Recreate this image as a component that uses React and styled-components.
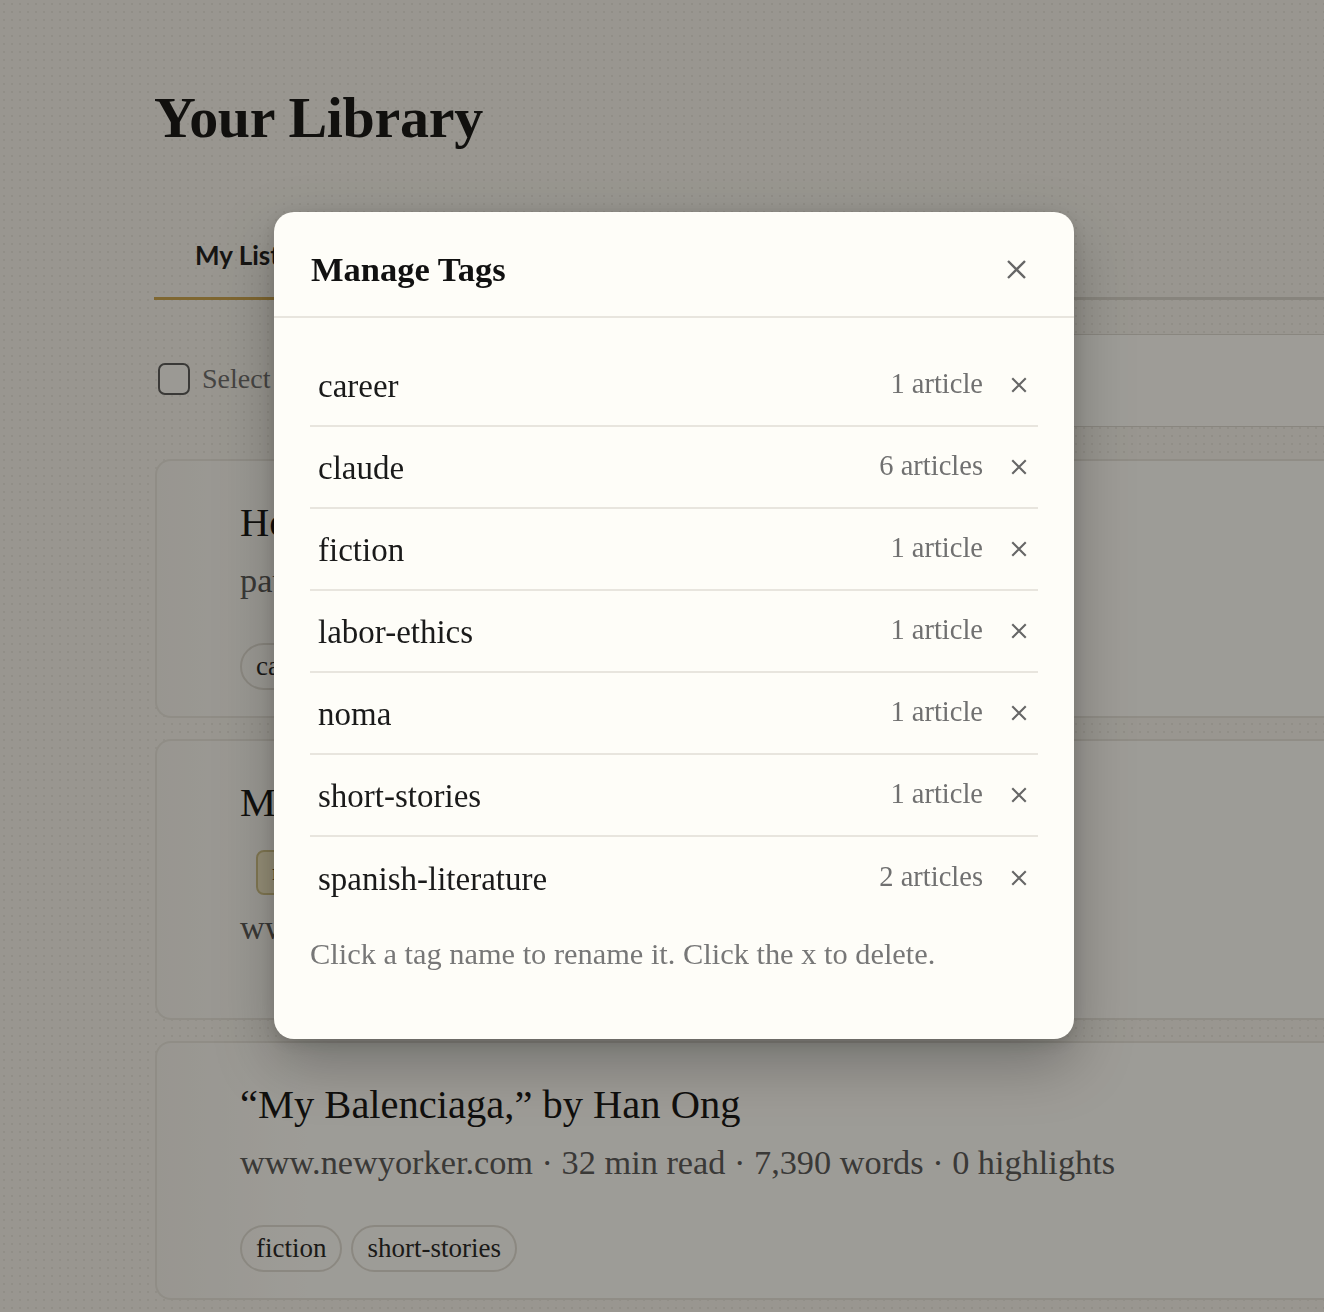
import React from "react";
import styled, { createGlobalStyle } from "styled-components";

const GlobalStyle = createGlobalStyle`
  html, body { margin: 0; padding: 0; }
  body {
    overflow: hidden;
    background-color: #f3f1ea;
    background-image: radial-gradient(rgba(120, 110, 90, 0.10) 1px, transparent 1.4px);
    background-size: 8px 8px;
    font-family: "Liberation Serif", "Times New Roman", serif;
    color: #111;
  }
`;

const Page = styled.main`
  width: 1260px;
  padding: 80px 0 40px 154px;
  box-sizing: content-box;
`;

const PageTitle = styled.h1`
  margin: 0;
  font-family: "Liberation Serif", serif;
  font-weight: 700;
  font-size: 58px;
  line-height: 76px;
  letter-spacing: -0.3px;
  color: #111;
`;

const Tabs = styled.nav`
  display: flex;
  margin-top: 56px;
  border-bottom: 3px solid #d6d3ca;
`;

const Tab = styled.div`
  padding: 0 40px 0 41px;
  height: 85px;
  display: flex;
  align-items: center;
  font-family: "Lato", "Noto Sans", sans-serif;
  font-weight: 700;
  font-size: 26px;
  color: ${(p) => (p.$active ? "#1a1a1a" : "#666")};
  border-bottom: 3px solid ${(p) => (p.$active ? "#c9a24c" : "transparent")};
  margin-bottom: -3px;
`;

const Toolbar = styled.div`
  display: flex;
  align-items: center;
  gap: 24px;
  margin-top: 34px;
  height: 93px;
`;

const SelectAll = styled.label`
  display: flex;
  align-items: center;
  gap: 12px;
  padding-left: 4px;
  margin-top: -3px;
  font-size: 28px;
  color: #6a6a6a;
  white-space: nowrap;
`;

const Checkbox = styled.span`
  width: 28px;
  height: 28px;
  border: 2px solid #555;
  border-radius: 7px;
  background: #f7f6f1;
`;

const Search = styled.div`
  flex: 1;
  align-self: stretch;
  margin-left: 300px;
  background: #fcfbf6;
  border-top: 1px solid #d9d6ce;
  border-bottom: 1px solid #d9d6ce;
  border-left: 1px solid #d9d6ce;
  border-radius: 10px 0 0 10px;
`;

const CardList = styled.div`
  display: flex;
  flex-direction: column;
  gap: 21px;
  margin-top: 32px;
`;

const Card = styled.article`
  margin-left: 1px;
  background: linear-gradient(90deg, #f2f0ea 0%, #fbfaf5 12%, #fbfaf5 100%);
  border: 2px solid #e4e1d9;
  border-right: none;
  border-radius: 16px 0 0 16px;
  padding: 36px 40px ${(p) => p.$bottom || 26}px 83px;
`;

const StackCard = styled(Card)`
  display: flex;
  flex-direction: column;
`;

const CardTitle = styled.h2`
  margin: 0;
  font-weight: 400;
  font-size: 40.5px;
  line-height: 52px;
  color: #111;
  white-space: nowrap;
`;

const Meta = styled.div`
  margin-top: ${(p) => p.$top || 10}px;
  font-size: 34.3px;
  line-height: 42px;
  color: #555;
  white-space: nowrap;
`;

const Badge = styled.span`
  display: inline-flex;
  align-items: center;
  align-self: flex-start;
  margin: 21px 0 0 16px;
  height: 41px;
  padding: 0 14px;
  border: 2px solid #cdbf85;
  background: #efe6c2;
  border-radius: 8px;
  font-size: 24px;
  color: #4a4020;
`;

const TagRow = styled.div`
  display: flex;
  gap: 9px;
  margin-top: 42px;
`;

const Pill = styled.span`
  display: inline-flex;
  align-items: center;
  height: 43px;
  padding: 0 14px;
  border: 2px solid #dcd9d0;
  border-radius: 24px;
  font-size: 27px;
  color: #222;
`;

const Overlay = styled.div`
  position: fixed;
  inset: 0;
  background: rgba(18, 16, 10, 0.4);
  display: flex;
  justify-content: center;
  align-items: flex-start;
  padding: 212px 0 0 24px;
`;

const Modal = styled.div`
  width: 800px;
  height: 827px;
  box-sizing: border-box;
  background: #fefdf8;
  border-radius: 20px;
  box-shadow: 0 24px 60px rgba(0, 0, 0, 0.28), 0 4px 14px rgba(0, 0, 0, 0.12);
  display: flex;
  flex-direction: column;
`;

const ModalHeader = styled.header`
  display: flex;
  align-items: center;
  justify-content: space-between;
  height: 106px;
  padding: 11px 40px 0 37px;
  box-sizing: border-box;
  border-bottom: 2px solid #e8e5de;
`;

const ModalTitle = styled.h3`
  margin: 0;
  font-weight: 700;
  font-size: 34.5px;
  color: #111;
`;

const IconButton = styled.button`
  display: flex;
  align-items: center;
  justify-content: center;
  width: ${(p) => p.$size + 12}px;
  height: ${(p) => p.$size + 12}px;
  padding: 0;
  border: none;
  background: transparent;
  color: #666;
`;

const ModalBody = styled.div`
  padding: 27px 36px 0 36px;
`;

const TagList = styled.ul`
  list-style: none;
  margin: 0;
  padding: 0;
`;

const TagItem = styled.li`
  display: flex;
  align-items: center;
  height: 82px;
  box-sizing: border-box;
  padding: 0 4px 0 8px;
  border-bottom: 2px solid #e8e5de;
  &:last-child { border-bottom: none; }
`;

const TagName = styled.span`
  flex: 1;
  font-size: 33px;
  color: #1a1a1a;
  padding-top: 2px;
`;

const Count = styled.span`
  font-size: 28.5px;
  color: #707070;
  margin-right: 21px;
  padding-bottom: 2px;
`;

const Hint = styled.p`
  margin: 18px 0 0 0;
  font-size: 30.4px;
  color: #777;
`;

const XIcon = ({ size, weight = 2.6 }) => (
  <svg width={size} height={size} viewBox="0 0 24 24" fill="none" stroke="currentColor" strokeWidth={weight} strokeLinecap="square">
    <path d="M4 4 L20 20 M20 4 L4 20" />
  </svg>
);

const tags = [
  ["career", "1 article"],
  ["claude", "6 articles"],
  ["fiction", "1 article"],
  ["labor-ethics", "1 article"],
  ["noma", "1 article"],
  ["short-stories", "1 article"],
  ["spanish-literature", "2 articles"],
];

export default function App() {
  return (
    <>
      <GlobalStyle />
      <Page>
        <PageTitle>Your Library</PageTitle>
        <Tabs>
          <Tab $active>My List</Tab>
          <Tab>Archive</Tab>
          <Tab>Highlights</Tab>
        </Tabs>
        <Toolbar>
          <SelectAll>
            <Checkbox />
            Select all
          </SelectAll>
          <Search />
        </Toolbar>
        <CardList>
          <Card>
            <CardTitle>How to Do Great Work</CardTitle>
            <Meta>paulgraham.com · 45 min read · 11,200 words</Meta>
            <TagRow>
              <Pill>career</Pill>
            </TagRow>
          </Card>
          <StackCard $bottom={70}>
            <CardTitle>Making Noma</CardTitle>
            <Badge>noma</Badge>
            <Meta $top={11}>www.example.com · 9 min read · 2,100 words</Meta>
          </StackCard>
          <Card>
            <CardTitle>“My Balenciaga,” by Han Ong</CardTitle>
            <Meta>www.newyorker.com · 32 min read · 7,390 words · 0 highlights</Meta>
            <TagRow>
              <Pill>fiction</Pill>
              <Pill>short-stories</Pill>
            </TagRow>
          </Card>
        </CardList>
      </Page>
      <Overlay>
        <Modal role="dialog" aria-label="Manage Tags">
          <ModalHeader>
            <ModalTitle>Manage Tags</ModalTitle>
            <IconButton $size={23} aria-label="Close">
              <XIcon size={23} weight={2.4} />
            </IconButton>
          </ModalHeader>
          <ModalBody>
            <TagList>
              {tags.map(([name, count]) => (
                <TagItem key={name}>
                  <TagName>{name}</TagName>
                  <Count>{count}</Count>
                  <IconButton $size={18} aria-label={`Delete ${name}`}>
                    <XIcon size={18} weight={2.8} />
                  </IconButton>
                </TagItem>
              ))}
            </TagList>
            <Hint>Click a tag name to rename it. Click the x to delete.</Hint>
          </ModalBody>
        </Modal>
      </Overlay>
    </>
  );
}
